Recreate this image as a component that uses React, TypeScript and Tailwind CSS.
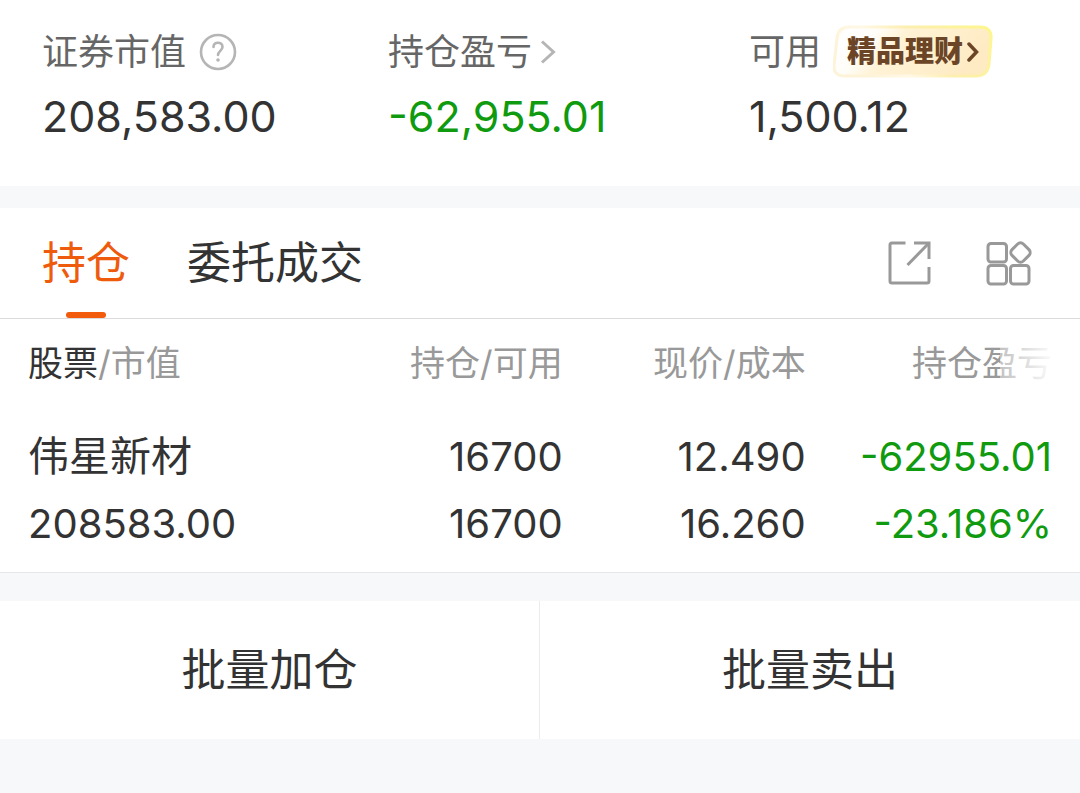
import React from 'react';

interface StockHolding {
  name: string;
  marketValue: string;
  amount: string;
  available: string;
  price: string;
  cost: string;
  profit: string;
  profitRate: string;
}

const holdings: StockHolding[] = [
  {
    name: '伟星新材',
    marketValue: '208583.00',
    amount: '16700',
    available: '16700',
    price: '12.490',
    cost: '16.260',
    profit: '-62955.01',
    profitRate: '-23.186%',
  },
];

const HelpIcon = () => (
  <svg className="h-10 w-10" viewBox="0 0 40 40" fill="none" stroke="#b5b5b5" strokeLinecap="round">
    <circle cx="20" cy="20" r="17" strokeWidth="2.6" />
    <path d="M15.5 15c0-2.800 2-4.300 4.500-4.300s4.500 1.600 4.500 4.300c0 3.600-4.500 4.200-4.500 8" strokeWidth="2.6" />
    <circle cx="20" cy="28" r="1.8" fill="#b5b5b5" stroke="none" />
  </svg>
);

const ShareIcon = () => (
  <svg className="h-12 w-12" viewBox="0 0 48 48" fill="none" stroke="#999" strokeWidth="3" strokeLinejoin="round">
    <path d="M19.5 4H6a2 2 0 0 0-2 2v36a2 2 0 0 0 2 2h35a2 2 0 0 0 2-2V28" />
    <path d="M28 4H43V20" strokeLinejoin="miter" />
    <path d="M42 5 21.5 26" />
  </svg>
);

const AppsIcon = () => (
  <svg className="h-12 w-12" viewBox="0 0 48 48" fill="none" stroke="#999" strokeWidth="3">
    <rect x="4" y="4.5" width="18.5" height="18.500" rx="3" />
    <rect x="4" y="26.5" width="18.5" height="18.500" rx="3" />
    <rect x="26.5" y="26.5" width="18.500" height="18.500" rx="3" />
    <rect x="28.500" y="5.500" width="16" height="16" rx="4" transform="rotate(45 36.500 13.500)" />
  </svg>
);

const WealthBadge = () => (
  <button type="button" className="relative ml-3 flex h-[54px] items-center gap-1 px-[14px] text-[29px] font-extrabold text-[#6b4526]">
    <svg className="absolute inset-0 h-full w-full" viewBox="0 0 158 54" preserveAspectRatio="none" fill="none">
      <defs>
        <linearGradient id="badgeFill" x1="0" y1="0" x2="1" y2="0.25">
          <stop offset="0" stopColor="#fff9ea" />
          <stop offset="0.1" stopColor="#ffffff" />
          <stop offset="0.28" stopColor="#fffdf8" />
          <stop offset="0.45" stopColor="#fff3d6" />
          <stop offset="1" stopColor="#feebc4" />
        </linearGradient>
        <linearGradient id="badgeEdge" x1="0" y1="0.3" x2="1" y2="0">
          <stop offset="0" stopColor="#fdf3d8" />
          <stop offset="0.25" stopColor="#fff8e4" />
          <stop offset="0.5" stopColor="#fdeeb0" />
          <stop offset="1" stopColor="#fdf68c" />
        </linearGradient>
      </defs>
      <path
        d="M16 2H145Q157 2 156 14L154 39Q153 51 141 51H12Q0 51 1 40L4 13Q5 2 16 2Z"
        fill="url(#badgeFill)"
        stroke="url(#badgeEdge)"
        strokeWidth="3"
      />
    </svg>
    <span className="relative">精品理财</span>
    <svg className="relative h-5 w-3" viewBox="0 0 12 20" fill="none" stroke="#6b4526" strokeWidth="3.5" strokeLinecap="round">
      <path d="M2 2 9.5 10 2 18" />
    </svg>
  </button>
);

const AccountSummary = () => (
  <section className="grid grid-cols-[346fr_361fr_331fr] bg-white pt-[25px] pb-[42px] pl-[42px]">
    <div>
      <div className="flex h-[54px] items-center gap-3 text-[36px] text-[#666]">
        <span>证券市值</span>
        <button type="button" aria-label="证券市值说明">
          <HelpIcon />
        </button>
      </div>
      <p className="mt-[9px] text-[43px] leading-[56px]">208,583.00</p>
    </div>
    <div>
      <button type="button" className="flex h-[54px] items-center gap-2 text-[36px] text-[#666]">
        <span>持仓盈亏</span>
        <svg className="h-6 w-4" viewBox="0 0 16 24" fill="none" stroke="#b5b5b5" strokeWidth="3">
          <path d="M2 1.5 13.5 12 2 22.5" />
        </svg>
      </button>
      <p className="mt-[9px] text-[43px] leading-[56px] text-[#0f9a0f]">-62,955.01</p>
    </div>
    <div>
      <div className="flex h-[54px] items-center text-[36px] text-[#666]">
        <span>可用</span>
        <WealthBadge />
      </div>
      <p className="mt-[9px] text-[43px] leading-[56px]">1,500.12</p>
    </div>
  </section>
);

const TabBar = () => (
  <nav className="flex items-center justify-between border-b border-[#dcdcdc] pr-12 pl-[42px]">
    <div className="flex gap-[57px] text-[44px]">
      <button type="button" className="relative h-[110px] text-[#ef5b0c]">
        持仓
        <span className="absolute bottom-0 left-1/2 h-1.5 w-10 -translate-x-1/2 rounded-full bg-[#f25a0c]" />
      </button>
      <button type="button" className="h-[110px]">
        委托成交
      </button>
    </div>
    <div className="flex gap-[50px]">
      <button type="button" aria-label="分享">
        <ShareIcon />
      </button>
      <button type="button" aria-label="更多功能">
        <AppsIcon />
      </button>
    </div>
  </nav>
);

const HoldingsTable = () => (
  <table className="w-full table-fixed border-b border-[#e6e8e8] text-right text-[40px]">
    <colgroup>
      <col className="w-[31.5%]" />
      <col className="w-[20.6%]" />
      <col className="w-[22.5%]" />
      <col className="w-[25.4%]" />
    </colgroup>
    <thead>
      <tr className="h-[88px] text-[35px] whitespace-nowrap text-[#999]">
        <th scope="col" className="pl-7 text-left font-normal">
          <span className="text-[#333]">股票</span>/市值
        </th>
        <th scope="col" className="font-normal">持仓/可用</th>
        <th scope="col" className="font-normal">现价/成本</th>
        <th scope="col" className="relative pr-7 font-normal">
          持仓盈亏
          <span className="absolute inset-y-0 right-0 w-20 bg-linear-to-r from-white/40 to-white to-70%" />
        </th>
      </tr>
    </thead>
    <tbody>
      {holdings.map((stock) => (
        <tr key={stock.name} className="leading-[67px]">
          <td className="pt-4 pb-[15px] pl-7 text-left">
            <div className="text-[41px]">{stock.name}</div>
            <div>{stock.marketValue}</div>
          </td>
          <td>
            <div>{stock.amount}</div>
            <div>{stock.available}</div>
          </td>
          <td>
            <div>{stock.price}</div>
            <div>{stock.cost}</div>
          </td>
          <td className="pr-7 text-[#0f9a0f]">
            <div>{stock.profit}</div>
            <div>{stock.profitRate}</div>
          </td>
        </tr>
      ))}
    </tbody>
  </table>
);

const App: React.FC = () => {
  return (
    <main className="min-h-screen bg-[#f7f8fa] font-['Inter','Noto_Sans_CJK_SC',sans-serif] text-[#333]">
      <AccountSummary />
      <section className="mt-[22px] bg-white">
        <TabBar />
        <HoldingsTable />
      </section>
      <div className="mt-7 grid grid-cols-2 divide-x divide-[#ececec] bg-white text-[44px]">
        <button type="button" className="h-[138px]">批量加仓</button>
        <button type="button" className="h-[138px]">批量卖出</button>
      </div>
    </main>
  );
};

export default App;
